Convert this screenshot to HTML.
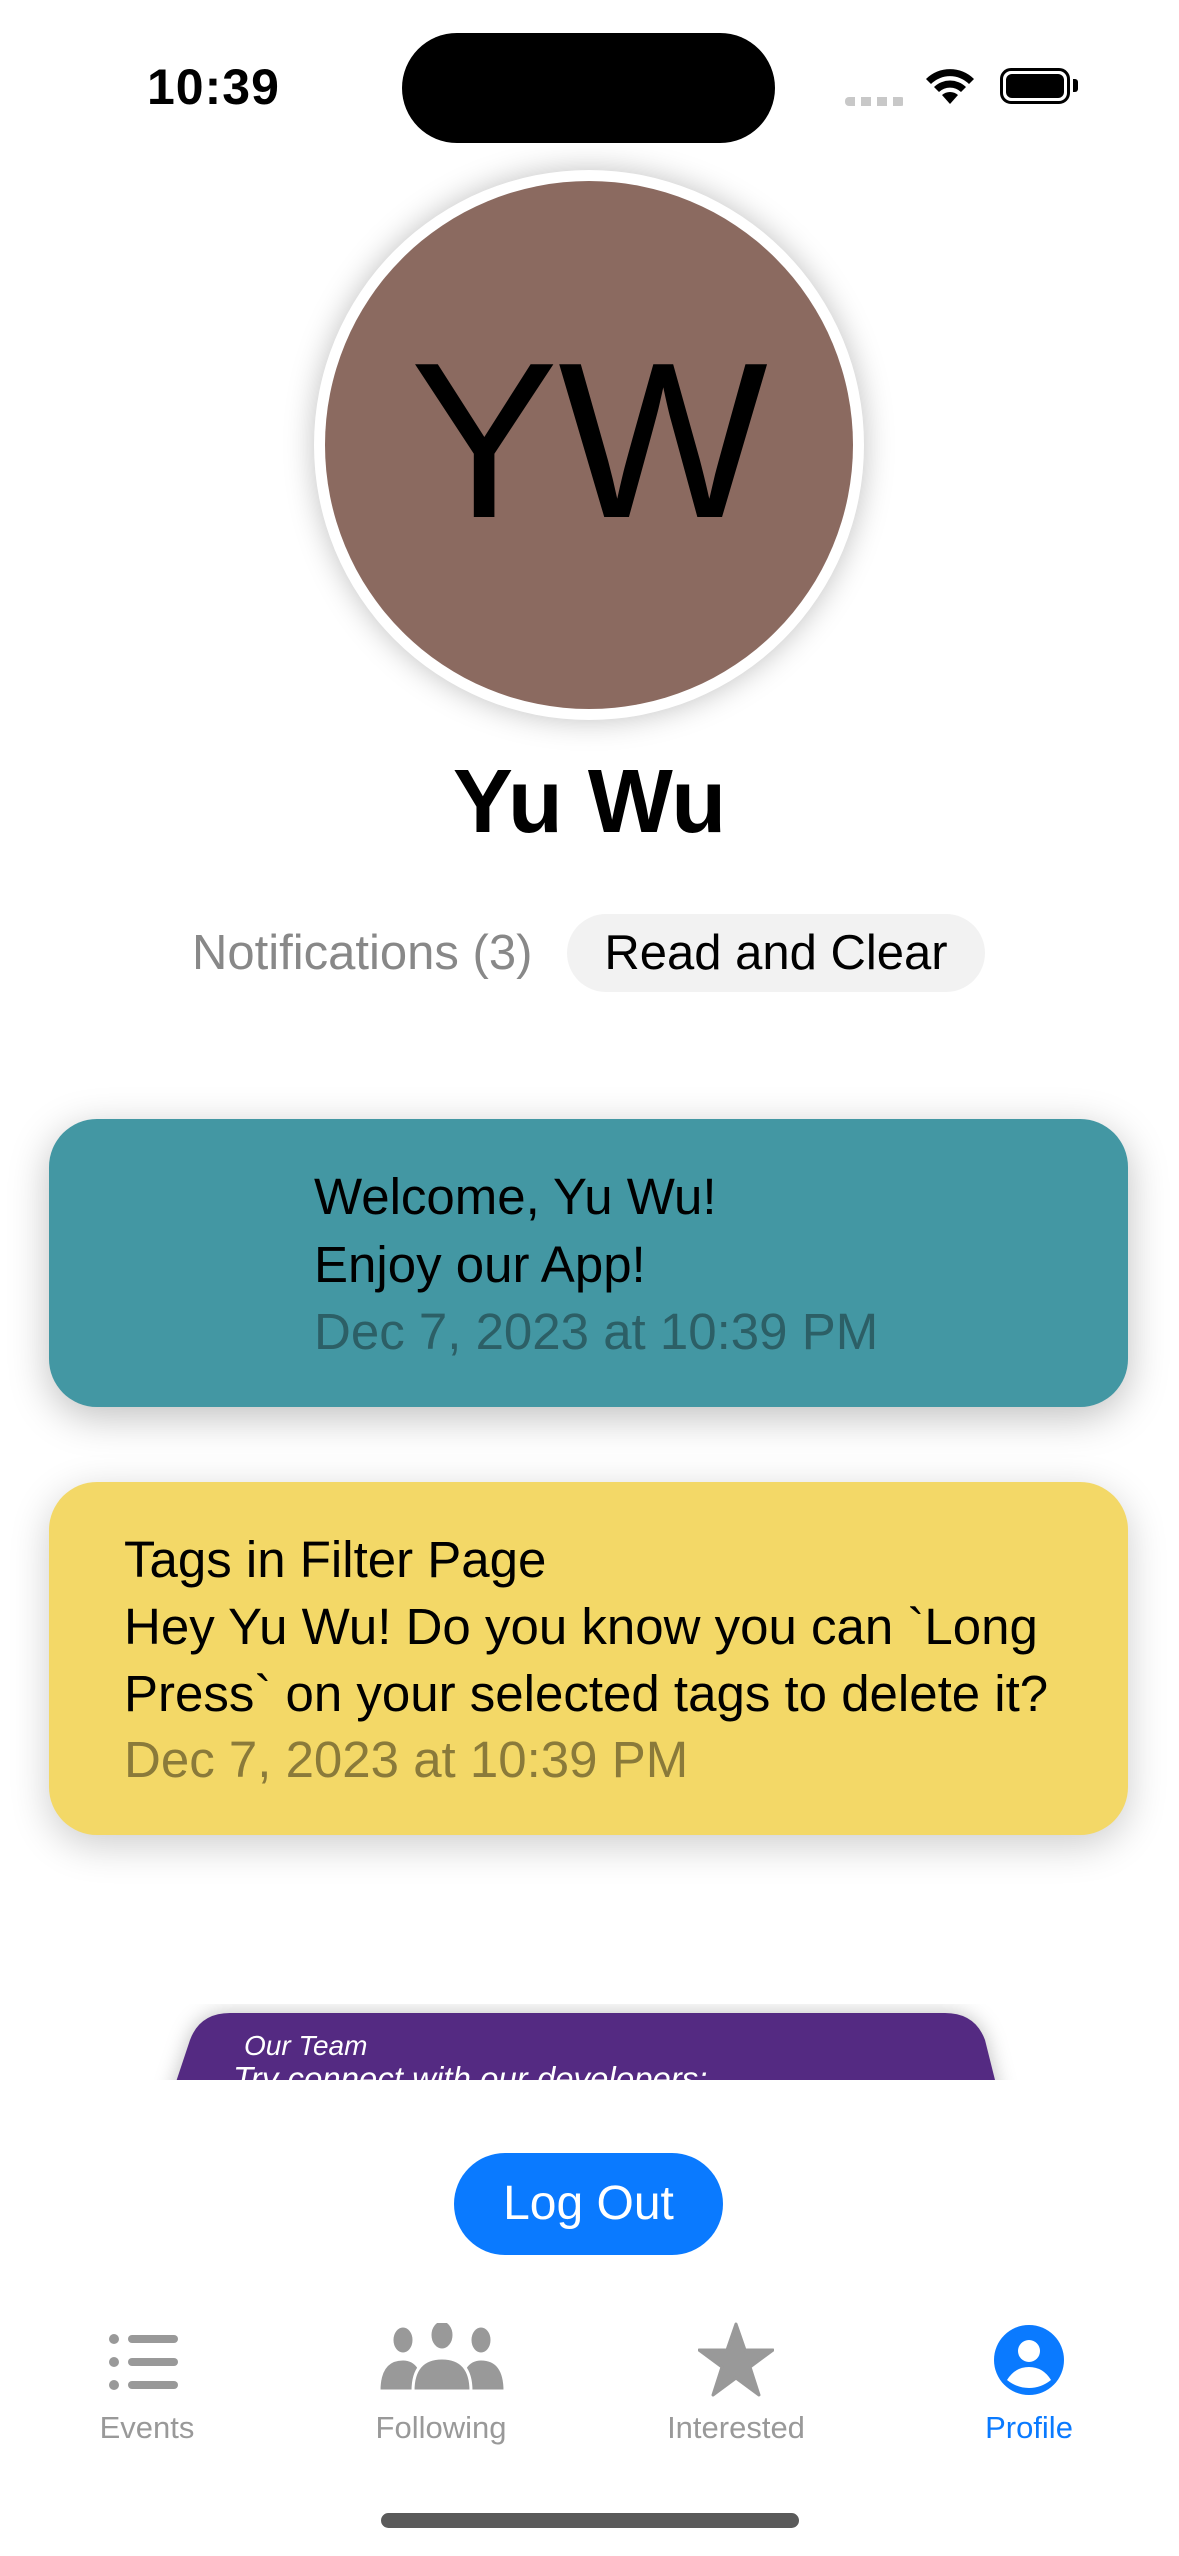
<!DOCTYPE html>
<html><head><meta charset="utf-8"><style>
*{margin:0;padding:0;box-sizing:border-box}
body{width:1179px;height:2556px;background:#fff;position:relative;overflow:hidden;font-family:"Liberation Sans",sans-serif}
.a{position:absolute}
.t{font-size:51px;line-height:67px;color:#000;white-space:nowrap}
</style></head><body>
<div class="a" style="left:147px;top:58px;font-size:50px;font-weight:bold;letter-spacing:1px">10:39</div>
<div class="a" style="left:402px;top:33px;width:373px;height:110px;border-radius:55px;background:#000"></div>
<div class="a" style="left:845px;top:97px;width:60px;height:9px;background:repeating-linear-gradient(90deg,#c8c8c8 0 10px,transparent 10px 16px);border-radius:4px"></div>
<svg class="a" style="left:925px;top:66px" width="50" height="40" viewBox="0 0 50 40"><path d="M25 38 L17 29 A12 12 0 0 1 33 29Z" fill="#000"/><path d="M9 21 A23 23 0 0 1 41 21 L36 26 A16 16 0 0 0 14 26Z" fill="#000"/><path d="M1 13 A34 34 0 0 1 49 13 L44 18 A27 27 0 0 0 6 18Z" fill="#000"/></svg>
<div class="a" style="left:1000px;top:68px;width:70px;height:36px;border:3px solid #000;border-radius:11px;padding:3px"><div style="width:100%;height:100%;background:#000;border-radius:6px"></div></div>
<div class="a" style="left:1073px;top:79px;width:5px;height:13px;background:#000;border-radius:0 3px 3px 0"></div>
<div class="a" style="left:314px;top:170px;width:550px;height:550px;border-radius:50%;background:#fff;box-shadow:0 0 30px rgba(0,0,0,.25)"></div>
<div class="a" style="left:325px;top:181px;width:528px;height:528px;border-radius:50%;background:#8b6a60;text-align:center;line-height:520px;font-size:222px;color:#000">YW</div>
<div class="a" style="left:0;width:1179px;top:752px;text-align:center;font-size:90px;font-weight:bold;line-height:100px">Yu Wu</div>
<div class="a" style="left:192px;top:920px;font-size:49px;line-height:66px;color:#888">Notifications (3)</div>
<div class="a" style="left:567px;top:914px;width:418px;height:78px;border-radius:39px;background:#f2f2f2;text-align:center;font-size:49px;line-height:78px">Read and Clear</div>
<div class="a" style="left:49px;top:1119px;width:1079px;height:288px;border-radius:48px;background:#4397a3;box-shadow:0 10px 40px rgba(0,0,0,.25)"></div>
<div class="a t" style="left:314px;top:1163px">Welcome, Yu Wu!</div>
<div class="a t" style="left:314px;top:1231px">Enjoy our App!</div>
<div class="a t" style="left:314px;top:1298px;color:#2c5f66">Dec 7, 2023 at 10:39 PM</div>
<div class="a" style="left:49px;top:1482px;width:1079px;height:353px;border-radius:48px;background:#f3d867;box-shadow:0 10px 40px rgba(0,0,0,.2)"></div>
<div class="a t" style="left:124px;top:1526px">Tags in Filter Page</div>
<div class="a t" style="left:124px;top:1593px">Hey Yu Wu! Do you know you can `Long</div>
<div class="a t" style="left:124px;top:1660px">Press` on your selected tags to delete it?</div>
<div class="a t" style="left:124px;top:1726px;color:#8a7a3a">Dec 7, 2023 at 10:39 PM</div>
<div class="a" style="left:0;top:1960px;width:1179px;height:120px;overflow:hidden">
<svg class="a" style="left:0;top:0" width="1179" height="120"><defs><filter id="s"><feGaussianBlur stdDeviation="10"/></filter></defs><path d="M230 53 Q200 53 190 80 L170 140 L1000 140 L985 80 Q975 53 945 53Z" fill="rgba(0,0,0,.25)" filter="url(#s)"/><path d="M230 53 Q200 53 190 80 L170 140 L1000 140 L985 80 Q975 53 945 53Z" fill="#542a82"/></svg>
<div class="a" style="left:244px;top:70px;font-size:28px;font-style:italic;color:#fff">Our Team</div>
<div class="a" style="left:233px;top:100px;font-size:33px;font-style:italic;color:#fff">Try connect with our developers:</div>
</div>
<div class="a" style="left:454px;top:2153px;width:269px;height:102px;border-radius:51px;background:#0a7aff;color:#fff;text-align:center;line-height:102px;font-size:48px">Log Out</div>
<svg class="a" style="left:108px;top:2330px" width="76" height="64" viewBox="0 0 76 64"><g fill="#999"><circle cx="6" cy="9" r="5"/><circle cx="6" cy="32" r="5"/><circle cx="6" cy="55" r="5"/><rect x="20" y="5" width="50" height="8" rx="4"/><rect x="20" y="28" width="50" height="8" rx="4"/><rect x="20" y="51" width="50" height="8" rx="4"/></g></svg>
<svg class="a" style="left:377px;top:2323px" width="130" height="70" viewBox="0 0 130 70"><g fill="#999" stroke="#fff" stroke-width="3"><ellipse cx="26" cy="17" rx="11" ry="14"/><ellipse cx="104" cy="17" rx="11" ry="14"/><ellipse cx="65" cy="12" rx="12" ry="15"/><path d="M2 68 Q2 36 26 36 Q46 36 48 68Z"/><path d="M82 68 Q84 36 104 36 Q128 36 128 68Z"/><path d="M36 68 Q36 35 65 35 Q94 35 94 68Z"/></g></svg>
<svg class="a" style="left:698px;top:2322px" width="76" height="76" viewBox="0 0 76 76"><path d="M38 2 L47 28 L75 28 L52 45 L61 73 L38 56 L15 73 L24 45 L1 28 L29 28Z" fill="#999" stroke="#999" stroke-width="3" stroke-linejoin="round"/></svg>
<svg class="a" style="left:993px;top:2324px" width="72" height="72" viewBox="0 0 72 72"><circle cx="36" cy="36" r="35" fill="#0a7aff"/><circle cx="36" cy="27" r="11" fill="#fff"/><path d="M14 56 Q22 43 36 43 Q50 43 58 56 Q48 64 36 64 Q24 64 14 56Z" fill="#fff"/></svg>
<div class="a" style="left:47px;width:200px;top:2410px;text-align:center;font-size:31px;color:#999">Events</div>
<div class="a" style="left:341px;width:200px;top:2410px;text-align:center;font-size:31px;color:#999">Following</div>
<div class="a" style="left:636px;width:200px;top:2410px;text-align:center;font-size:31px;color:#999">Interested</div>
<div class="a" style="left:929px;width:200px;top:2410px;text-align:center;font-size:31px;color:#0a7aff">Profile</div>
<div class="a" style="left:381px;top:2513px;width:418px;height:15px;border-radius:8px;background:#5a5a5a"></div>
</body></html>
